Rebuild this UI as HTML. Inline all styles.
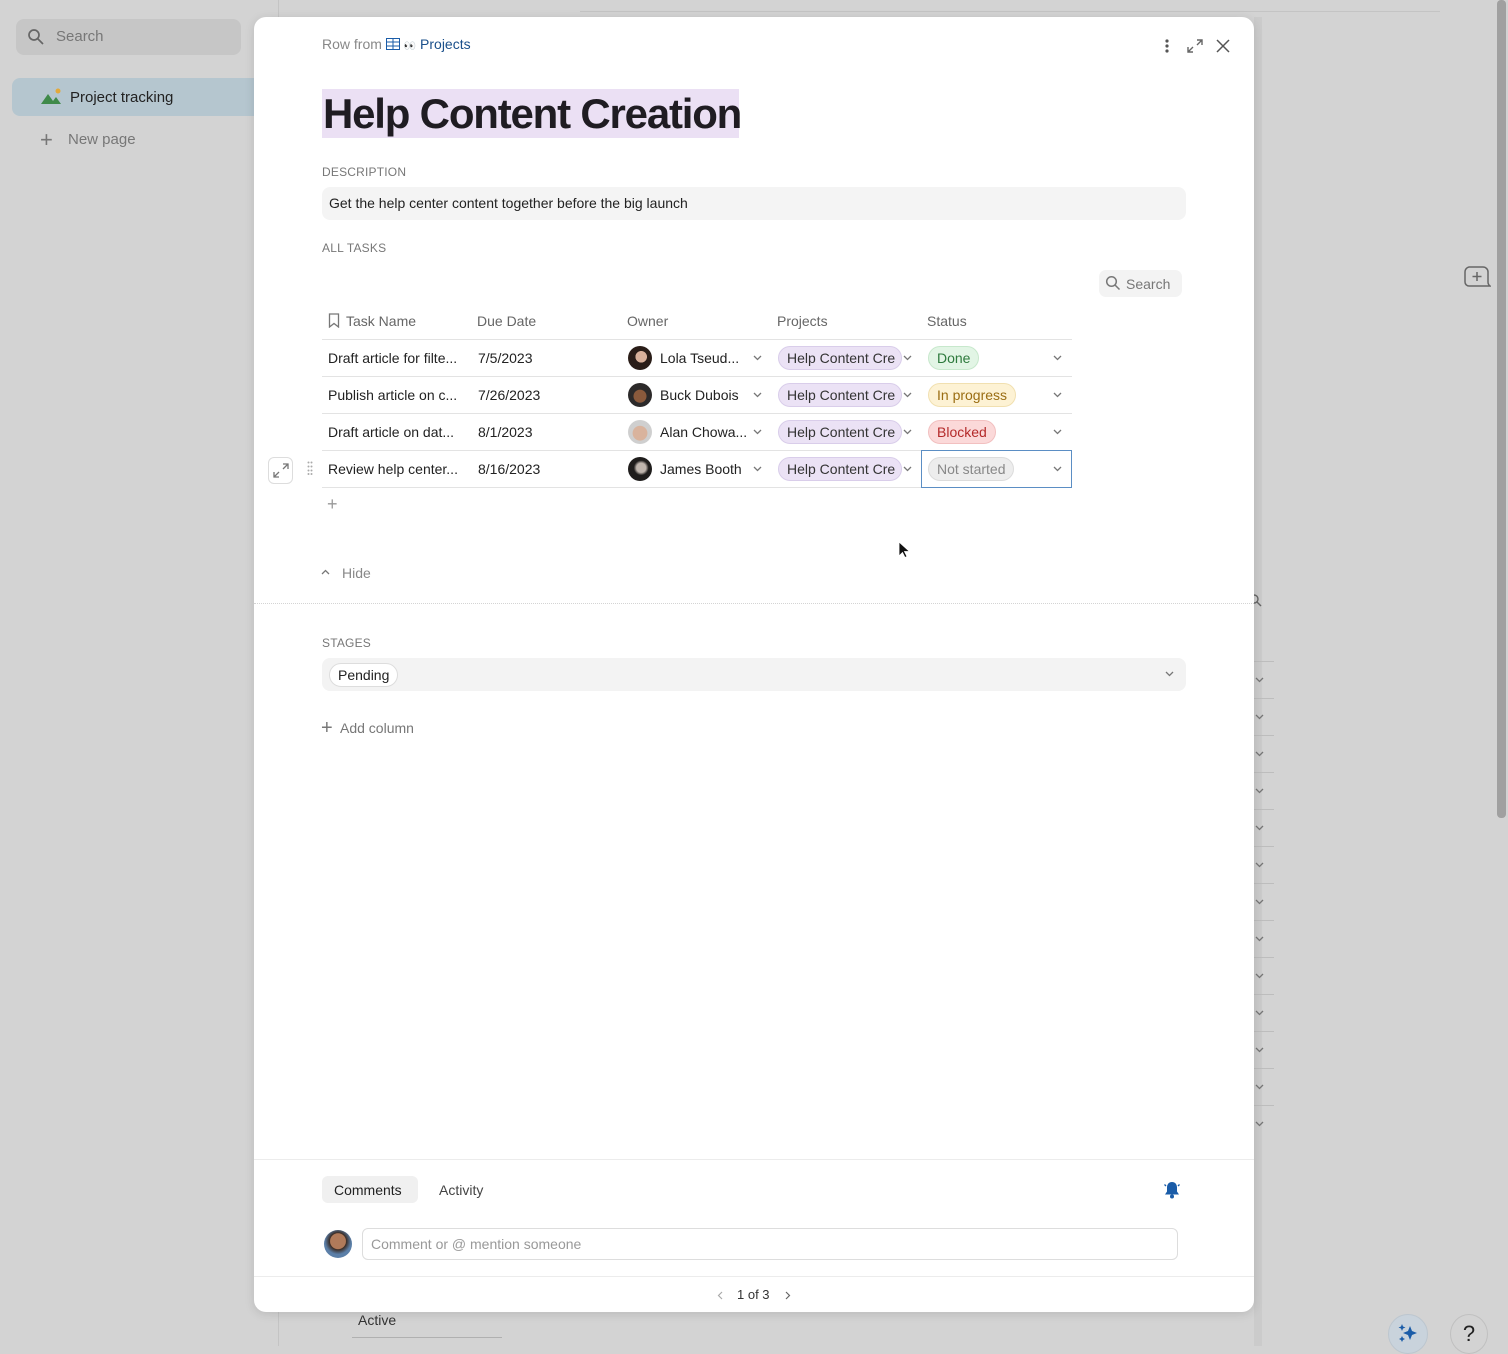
<!DOCTYPE html>
<html><head><meta charset="utf-8"><style>
*{box-sizing:border-box;margin:0;padding:0}
body{width:1508px;height:1346px;background:#d3d3d3;font-family:"Liberation Sans",sans-serif;position:relative;overflow:hidden;color:#222}
.abs{position:absolute}
.side{left:0;top:0;width:279px;height:1346px;border-right:1px solid #c4c4c4}
.modal{left:254px;top:17px;width:1000px;height:1295px;background:#fff;border-radius:12px;overflow:hidden;box-shadow:0 2px 10px rgba(0,0,0,.12)}
.lbl{font-size:12px;color:#777;letter-spacing:.2px}
.t{font-size:14px;color:#222;white-space:nowrap}
.hd{font-size:14px;color:#666}
.rowline{height:1px;background:#e3e3e3;left:68px;width:750px}
.chip{border-radius:12px;font-size:14px;padding:3px 8px;white-space:nowrap;overflow:hidden}
.proj{background:#ebe2f5;border:1px solid #d9cdea;color:#333;width:124px;height:24px}
.av{width:24px;height:24px;border-radius:50%}
.bgchev{left:1254px;width:20px;height:1px;background:#bdbdbd}
.cv{position:absolute;width:9px;height:6px}
</style></head><body>
<svg width="0" height="0" style="position:absolute"><defs><symbol id="c" viewBox="0 0 9 6"><path d="M1 1l3.5 3.5L8 1" fill="none" stroke="#777" stroke-width="1.3"/></symbol></defs></svg>
<div class="abs side"></div>
<div class="abs" style="left:16px;top:19px;width:225px;height:36px;background:#c6c6c6;border-radius:8px"></div>
<svg class="abs" style="left:27px;top:28px" width="18" height="18" viewBox="0 0 18 18"><circle cx="7" cy="7" r="5" fill="none" stroke="#666" stroke-width="1.7"/><path d="M11 11l5 5" stroke="#666" stroke-width="1.7"/></svg>
<div class="abs" style="left:56px;top:28px;font-size:15px;color:#777">Search</div>
<div class="abs" style="left:12px;top:78px;width:250px;height:38px;background:#b5c6cf;border-radius:8px"></div>
<svg class="abs" style="left:40px;top:87px" width="22" height="18" viewBox="0 0 22 18"><path d="M1 17l7-10 5 7 3-4 5 7z" fill="#3f8a4a"/><circle cx="18" cy="4" r="2.5" fill="#e3a93a"/></svg>
<div class="abs" style="left:70px;top:89px;font-size:15px;color:#222">Project tracking</div>
<div class="abs" style="left:40px;top:127px;font-size:22px;color:#777;font-weight:300">+</div>
<div class="abs" style="left:68px;top:131px;font-size:15px;color:#777">New page</div>
<div class="abs" style="left:580px;top:0;width:860px;height:12px;border-bottom:1px solid #c4c4c4"></div>
<!-- background right elements -->
<div class="abs" style="left:1254px;top:17px;width:8px;height:1329px;background:#cbcbcb"></div>
<svg class="abs" style="left:1250px;top:594px" width="12" height="14" viewBox="0 0 12 14"><circle cx="4" cy="5" r="4" fill="none" stroke="#666" stroke-width="1.4"/><path d="M7 8l4 4" stroke="#666" stroke-width="1.4"/></svg>
<div class="abs bgchev" style="top:661px"></div><div class="abs bgchev" style="top:698px"></div><div class="abs bgchev" style="top:735px"></div><div class="abs bgchev" style="top:772px"></div><div class="abs bgchev" style="top:809px"></div><div class="abs bgchev" style="top:846px"></div><div class="abs bgchev" style="top:883px"></div><div class="abs bgchev" style="top:920px"></div><div class="abs bgchev" style="top:957px"></div><div class="abs bgchev" style="top:994px"></div><div class="abs bgchev" style="top:1031px"></div><div class="abs bgchev" style="top:1068px"></div><div class="abs bgchev" style="top:1105px"></div>
<svg class="cv" style="left:1255px;top:677px"><use href="#c"/></svg><svg class="cv" style="left:1255px;top:714px"><use href="#c"/></svg><svg class="cv" style="left:1255px;top:751px"><use href="#c"/></svg><svg class="cv" style="left:1255px;top:788px"><use href="#c"/></svg><svg class="cv" style="left:1255px;top:825px"><use href="#c"/></svg><svg class="cv" style="left:1255px;top:862px"><use href="#c"/></svg><svg class="cv" style="left:1255px;top:899px"><use href="#c"/></svg><svg class="cv" style="left:1255px;top:936px"><use href="#c"/></svg><svg class="cv" style="left:1255px;top:973px"><use href="#c"/></svg><svg class="cv" style="left:1255px;top:1010px"><use href="#c"/></svg><svg class="cv" style="left:1255px;top:1047px"><use href="#c"/></svg><svg class="cv" style="left:1255px;top:1084px"><use href="#c"/></svg><svg class="cv" style="left:1255px;top:1121px"><use href="#c"/></svg>
<div class="abs" style="left:1497px;top:0;width:9px;height:818px;background:#a0a0a0;border-radius:4px"></div>
<svg class="abs" style="left:1463px;top:265px" width="28" height="26" viewBox="0 0 28 26"><path d="M6 2h14a5 5 0 0 1 5 5v10a5 5 0 0 0 2 4h-21a4 4 0 0 1-4-4v-10a5 5 0 0 1 4-5z" fill="none" stroke="#666" stroke-width="1.5"/><path d="M14 7v9M9.5 11.5h9" stroke="#666" stroke-width="1.5"/></svg>
<div class="abs" style="left:358px;top:1312px;font-size:14px;color:#333">Active</div>
<div class="abs" style="left:352px;top:1337px;width:150px;height:1px;background:#b0b0b0"></div>
<div class="abs" style="left:1388px;top:1314px;width:40px;height:40px;border-radius:50%;background:#c9d3dc;border:1px solid #bcc6cf"></div>
<svg class="abs" style="left:1397px;top:1322px" width="22" height="22" viewBox="0 0 22 22"><path d="M13 4l2 5 5 2-5 2-2 5-2-5-5-2 5-2z" fill="#1a5ca8"/><path d="M5 2l1 2.5 2.5 1-2.5 1-1 2.5-1-2.5-2.5-1 2.5-1z" fill="#1a5ca8"/><path d="M5 14l1 2 2 1-2 1-1 2-1-2-2-1 2-1z" fill="#1a5ca8"/></svg>
<div class="abs" style="left:1450px;top:1314px;width:38px;height:40px;border-radius:50%;border:1px solid #c0c0c0;font-size:22px;text-align:center;line-height:38px;color:#222">?</div>

<div class="abs modal">
  <div class="abs" style="left:68px;top:19px;font-size:14px;color:#888">Row from <svg width="14" height="12" viewBox="0 0 14 12" style="vertical-align:-1px"><rect x="0.5" y="0.5" width="13" height="11" fill="none" stroke="#1a5ca8"/><path d="M0 4h14M0 8h14M7 0v12" stroke="#1a5ca8"/></svg> <span style="font-size:10px">👀</span> <span style="color:#1a4f8a">Projects</span></div>
  <svg class="abs" style="left:910px;top:21px" width="6" height="16" viewBox="0 0 6 16"><circle cx="3" cy="3" r="1.6" fill="#555"/><circle cx="3" cy="8" r="1.6" fill="#555"/><circle cx="3" cy="13" r="1.6" fill="#555"/></svg>
  <svg class="abs" style="left:932px;top:21px" width="18" height="16" viewBox="0 0 18 16"><path d="M11 2h5v5M16 2l-5 5M2 9v5h5M2 14l5-5" fill="none" stroke="#666" stroke-width="1.4"/></svg>
  <svg class="abs" style="left:962px;top:22px" width="14" height="14" viewBox="0 0 14 14"><path d="M1 1l12 12M13 1L1 13" stroke="#555" stroke-width="1.5"/></svg>
  <div class="abs" style="left:68px;top:72px;height:49px;width:417px;background:#ebe0f4"></div>
  <div class="abs" style="left:69px;top:73px;font-size:42px;font-weight:bold;color:#1f1c22;letter-spacing:-1.2px">Help Content Creation</div>
  <div class="abs lbl" style="left:68px;top:148px">DESCRIPTION</div>
  <div class="abs" style="left:68px;top:170px;width:864px;height:33px;background:#f4f4f4;border-radius:8px;padding:8px 7px;font-size:14px;color:#222">Get the help center content together before the big launch</div>
  <div class="abs lbl" style="left:68px;top:224px">ALL TASKS</div>
  <div class="abs" style="left:845px;top:253px;width:83px;height:27px;background:#f3f3f3;border-radius:7px"></div>
  <svg class="abs" style="left:851px;top:258px" width="16" height="16" viewBox="0 0 16 16"><circle cx="6.5" cy="6.5" r="4.8" fill="none" stroke="#777" stroke-width="1.5"/><path d="M10 10l4.5 4.5" stroke="#777" stroke-width="1.5"/></svg>
  <div class="abs" style="left:872px;top:259px;font-size:14px;color:#777">Search</div>

  <svg class="abs" style="left:74px;top:296px" width="12" height="15" viewBox="0 0 12 15"><path d="M1.5 1h9v13l-4.5-3.5-4.5 3.5z" fill="none" stroke="#777" stroke-width="1.3"/></svg>
  <div class="abs hd" style="left:92px;top:296px">Task Name</div>
  <div class="abs hd" style="left:223px;top:296px">Due Date</div>
  <div class="abs hd" style="left:373px;top:296px">Owner</div>
  <div class="abs hd" style="left:523px;top:296px">Projects</div>
  <div class="abs hd" style="left:673px;top:296px">Status</div>
  <div class="abs rowline" style="top:322px"></div>
  <div class="abs rowline" style="top:359px"></div>
  <div class="abs rowline" style="top:396px"></div>
  <div class="abs rowline" style="top:433px"></div>
  <div class="abs rowline" style="top:470px"></div>

  <!-- rows -->
  <div class="abs t" style="left:74px;top:333px">Draft article for filte...</div>
  <div class="abs t" style="left:224px;top:333px">7/5/2023</div>
  <div class="abs av" style="left:374px;top:329px;background:radial-gradient(circle at 55% 45%,#d8b09a 30%,#2a1d18 32%)"></div>
  <div class="abs t" style="left:406px;top:333px">Lola Tseud...</div>
  <svg class="cv" style="left:499px;top:338px"><use href="#c"/></svg>
  <div class="abs chip proj" style="left:524px;top:329px">Help Content Cre</div><svg class="cv" style="left:649px;top:338px"><use href="#c"/></svg>
  <div class="abs chip" style="left:674px;top:329px;background:#e2f5e5;border:1px solid #c7e8cc;color:#2d7a3c">Done</div>
  <svg class="cv" style="left:799px;top:338px"><use href="#c"/></svg>

  <div class="abs t" style="left:74px;top:370px">Publish article on c...</div>
  <div class="abs t" style="left:224px;top:370px">7/26/2023</div>
  <div class="abs av" style="left:374px;top:366px;background:radial-gradient(circle at 50% 55%,#8a5a3c 35%,#2c2a2a 38%)"></div>
  <div class="abs t" style="left:406px;top:370px">Buck Dubois</div>
  <svg class="cv" style="left:499px;top:375px"><use href="#c"/></svg>
  <div class="abs chip proj" style="left:524px;top:366px">Help Content Cre</div><svg class="cv" style="left:649px;top:375px"><use href="#c"/></svg>
  <div class="abs chip" style="left:674px;top:366px;background:#fdf2d4;border:1px solid #f1e0b0;color:#9a6d12">In progress</div>
  <svg class="cv" style="left:799px;top:375px"><use href="#c"/></svg>

  <div class="abs t" style="left:74px;top:407px">Draft article on dat...</div>
  <div class="abs t" style="left:224px;top:407px">8/1/2023</div>
  <div class="abs av" style="left:374px;top:403px;background:radial-gradient(circle at 50% 55%,#d9b39d 40%,#cfcfcf 43%)"></div>
  <div class="abs t" style="left:406px;top:407px">Alan Chowa...</div>
  <svg class="cv" style="left:499px;top:412px"><use href="#c"/></svg>
  <div class="abs chip proj" style="left:524px;top:403px">Help Content Cre</div><svg class="cv" style="left:649px;top:412px"><use href="#c"/></svg>
  <div class="abs chip" style="left:674px;top:403px;background:#fbd9d9;border:1px solid #f2c0c0;color:#b42a2a">Blocked</div>
  <svg class="cv" style="left:799px;top:412px"><use href="#c"/></svg>

  <div class="abs" style="left:14px;top:440px;width:25px;height:27px;border:1px solid #ddd;border-radius:6px"></div>
  <svg class="abs" style="left:19px;top:446px" width="16" height="15" viewBox="0 0 16 15"><path d="M10 1h5v5M15 1l-5 5M1 9v5h5M1 14l5-5" fill="none" stroke="#777" stroke-width="1.3"/></svg>
  <svg class="abs" style="left:53px;top:444px" width="6" height="14" viewBox="0 0 6 14"><g fill="#aaa"><circle cx="1.5" cy="1.5" r="1"/><circle cx="4.5" cy="1.5" r="1"/><circle cx="1.5" cy="5.5" r="1"/><circle cx="4.5" cy="5.5" r="1"/><circle cx="1.5" cy="9.5" r="1"/><circle cx="4.5" cy="9.5" r="1"/><circle cx="1.5" cy="13" r="1"/><circle cx="4.5" cy="13" r="1"/></g></svg>
  <div class="abs t" style="left:74px;top:444px">Review help center...</div>
  <div class="abs t" style="left:224px;top:444px">8/16/2023</div>
  <div class="abs av" style="left:374px;top:440px;background:radial-gradient(circle at 55% 45%,#bfb5ad 25%,#1f1d1c 40%)"></div>
  <div class="abs t" style="left:406px;top:444px">James Booth</div>
  <svg class="cv" style="left:499px;top:449px"><use href="#c"/></svg>
  <div class="abs chip proj" style="left:524px;top:440px">Help Content Cre</div><svg class="cv" style="left:649px;top:449px"><use href="#c"/></svg>
  <div class="abs" style="left:667px;top:433px;width:151px;height:38px;border:1px solid #5b8ec4"></div>
  <div class="abs chip" style="left:674px;top:440px;background:#ededed;border:1px solid #dcdcdc;color:#888">Not started</div>
  <svg class="cv" style="left:799px;top:449px"><use href="#c"/></svg>

  <div class="abs" style="left:73px;top:477px;font-size:18px;color:#999;font-weight:300">+</div>
  <svg class="abs" style="left:644px;top:524px" width="12" height="18" viewBox="0 0 12 18"><path d="M1 1v14l3.5-3.5 2.5 5 2-1-2.5-5h5z" fill="#111" stroke="#fff" stroke-width=".8"/></svg>
  <svg class="abs" style="left:67px;top:552px" width="9" height="6" viewBox="0 0 9 6"><path d="M1 5l3.5-3.5L8 5" fill="none" stroke="#777" stroke-width="1.3"/></svg>
  <div class="abs" style="left:88px;top:548px;font-size:14px;color:#888">Hide</div>
  <div class="abs" style="left:0;top:586px;width:1000px;border-top:1px dotted #d4d4d4"></div>
  <div class="abs lbl" style="left:68px;top:619px">STAGES</div>
  <div class="abs" style="left:68px;top:641px;width:864px;height:33px;background:#f3f3f3;border-radius:8px"></div>
  <div class="abs" style="left:75px;top:646px;height:24px;padding:3px 8px;background:#fff;border:1px solid #ddd;border-radius:12px;font-size:14px">Pending</div>
  <svg class="cv" style="left:911px;top:654px"><use href="#c"/></svg>
  <div class="abs" style="left:67px;top:700px;font-size:20px;color:#777;font-weight:300">+</div>
  <div class="abs" style="left:86px;top:703px;font-size:14px;color:#777">Add column</div>

  <div class="abs" style="left:0;top:1142px;width:1000px;height:1px;background:#ececec"></div>
  <div class="abs" style="left:68px;top:1159px;width:96px;height:27px;background:#f0f0f0;border-radius:6px"></div>
  <div class="abs" style="left:80px;top:1165px;font-size:14px;color:#222">Comments</div>
  <div class="abs" style="left:185px;top:1165px;font-size:14px;color:#444">Activity</div>
  <svg class="abs" style="left:908px;top:1163px" width="20" height="20" viewBox="0 0 20 20"><path d="M10 2c-3 0-5 2.3-5 5.5v4l-2 3h14l-2-3v-4c0-3.2-2-5.5-5-5.5z" fill="#1a5ca8"/><circle cx="10" cy="16.5" r="2" fill="#1a5ca8"/><path d="M2.5 4.5l1.5 1.5M17.5 4.5l-1.5 1.5" stroke="#1a5ca8" stroke-width="1.3"/></svg>
  <div class="abs" style="left:70px;top:1213px;width:28px;height:28px;border-radius:50%;background:radial-gradient(circle at 50% 40%,#b07a5a 35%,#3a2c25 38%,#5b7fa8 60%)"></div>
  <div class="abs" style="left:108px;top:1211px;width:816px;height:32px;border:1px solid #ddd;border-radius:6px;padding:7px 8px;font-size:14px;color:#999">Comment or @ mention someone</div>
  <div class="abs" style="left:0;top:1259px;width:1000px;height:1px;background:#ececec"></div>
  <svg class="abs" style="left:463px;top:1274px" width="6" height="9" viewBox="0 0 6 9"><path d="M5 1L1.5 4.5 5 8" fill="none" stroke="#aaa" stroke-width="1.2"/></svg>
  <div class="abs" style="left:483px;top:1270px;font-size:13px;color:#333">1 of 3</div>
  <svg class="abs" style="left:531px;top:1274px" width="6" height="9" viewBox="0 0 6 9"><path d="M1 1l3.5 3.5L1 8" fill="none" stroke="#666" stroke-width="1.2"/></svg>
</div>
</body></html>
